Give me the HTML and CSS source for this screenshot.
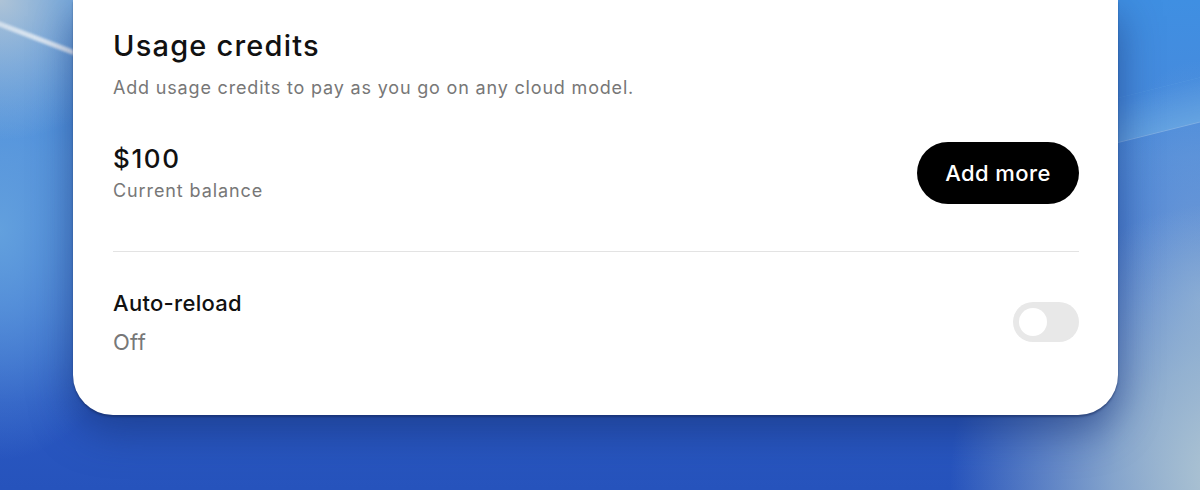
FILE: index.html
```html
<!DOCTYPE html>
<html lang="en">
<head>
<meta charset="utf-8">
<title>Usage credits</title>
<link rel="stylesheet" href="styles.css">
</head>
<body>
<div class="desktop">
  <div class="streak streak-left"></div>
  <div class="streak streak-right"></div>
  <section class="card">
    <h1 class="title">Usage credits</h1>
    <p class="subtitle">Add usage credits to pay as you go on any cloud model.</p>
    <div class="balance-row">
      <div class="balance">
        <div class="amount">$100</div>
        <div class="caption">Current balance</div>
      </div>
      <button class="add-btn" type="button">Add more</button>
    </div>
    <hr class="divider">
    <div class="reload-row">
      <div class="reload">
        <div class="reload-label">Auto-reload</div>
        <div class="reload-state">Off</div>
      </div>
      <div class="toggle" role="switch" aria-checked="false"><span class="knob"></span></div>
    </div>
  </section>
</div>
</body>
</html>
```

FILE: styles.css
```css
* { box-sizing: border-box; }
html, body { margin: 0; padding: 0; }
body {
  width: 1200px;
  height: 490px;
  overflow: hidden;
  font-family: "Inter", "Noto Sans", sans-serif;
}
.desktop {
  position: relative;
  width: 1200px;
  height: 490px;
  overflow: hidden;
  padding-left: 73px;
  background:
    radial-gradient(ellipse 300px 280px at 1250px 480px, rgba(185,205,212,1), rgba(165,192,210,0.75) 45%, rgba(120,160,210,0) 100%),
    radial-gradient(ellipse 120px 240px at 1200px 300px, rgba(140,175,215,0.7), rgba(120,160,210,0) 100%),
    radial-gradient(ellipse 150px 140px at 0px 0px, rgba(180,198,214,0.95), rgba(175,195,215,0) 100%),
    radial-gradient(ellipse 150px 230px at 0px 230px, rgba(100,162,222,0.95), rgba(95,155,220,0) 100%),
    linear-gradient(180deg, #3f8fe2 0%, #4a88da 32%, #3a6ed0 62%, #2a58c2 82%, #2653bc 100%);
}
.streak {
  position: absolute;
  pointer-events: none;
}
.streak-left {
  left: -20px;
  top: 14px;
  width: 110px;
  height: 5px;
  background: linear-gradient(90deg, rgba(235,240,245,0.6), rgba(240,244,248,0.95));
  transform: rotate(21deg);
  transform-origin: left center;
  filter: blur(1px);
}
.streak-right {
  left: 1110px;
  top: 100px;
  width: 110px;
  height: 45px;
  background: linear-gradient(180deg, rgba(130,185,235,0) 0%, rgba(120,185,232,0.45) 100%);
  transform: skewY(-14deg);
  transform-origin: left bottom;
  border-bottom: 1px solid rgba(160,200,235,0.55);
}
.card {
  position: relative;
  width: 1045px;
  height: 415px;
  background: #ffffff;
  border-radius: 0 0 40px 40px;
  padding: 28px 39px 0 40px;
  box-shadow: 0 2px 2px rgba(20,40,90,0.5), 0 16px 40px rgba(20,45,110,0.55);
}
.title {
  margin: 0;
  font-size: 29px;
  line-height: 36px;
  font-weight: 450;
  color: #111111;
  letter-spacing: 1.2px;
}
.subtitle {
  margin: 12px 0 0;
  font-size: 18px;
  line-height: 24px;
  color: #777777;
  letter-spacing: 0.82px;
}
.balance-row {
  display: flex;
  align-items: center;
  justify-content: space-between;
  margin-top: 42px;
}
.amount {
  font-size: 26px;
  line-height: 32px;
  font-weight: 500;
  color: #111111;
  letter-spacing: 1.6px;
}
.caption {
  margin-top: 4px;
  font-size: 18px;
  line-height: 24px;
  color: #777777;
  letter-spacing: 0.9px;
}
.add-btn {
  width: 162px;
  height: 62px;
  border: none;
  border-radius: 31px;
  background: #000000;
  color: #ffffff;
  font-family: inherit;
  font-size: 22px;
  font-weight: 500;
  letter-spacing: 0.4px;
  padding: 0;
}
.divider {
  margin: 47px 0 0;
  border: none;
  border-top: 1px solid #e3e3e3;
  height: 0;
}
.reload-row {
  display: flex;
  align-items: center;
  justify-content: space-between;
  margin-top: 38px;
}
.reload-label {
  font-size: 22px;
  line-height: 26px;
  font-weight: 500;
  color: #111111;
  letter-spacing: 0.3px;
}
.reload-state {
  margin-top: 13px;
  font-size: 22px;
  line-height: 26px;
  color: #777777;
  letter-spacing: 0.3px;
}
.toggle {
  position: relative;
  width: 66px;
  height: 40px;
  border-radius: 20px;
  background: #e8e8e8;
  margin-bottom: 2px;
}
.knob {
  position: absolute;
  left: 6px;
  top: 6px;
  width: 28px;
  height: 28px;
  border-radius: 50%;
  background: #ffffff;
}
```
